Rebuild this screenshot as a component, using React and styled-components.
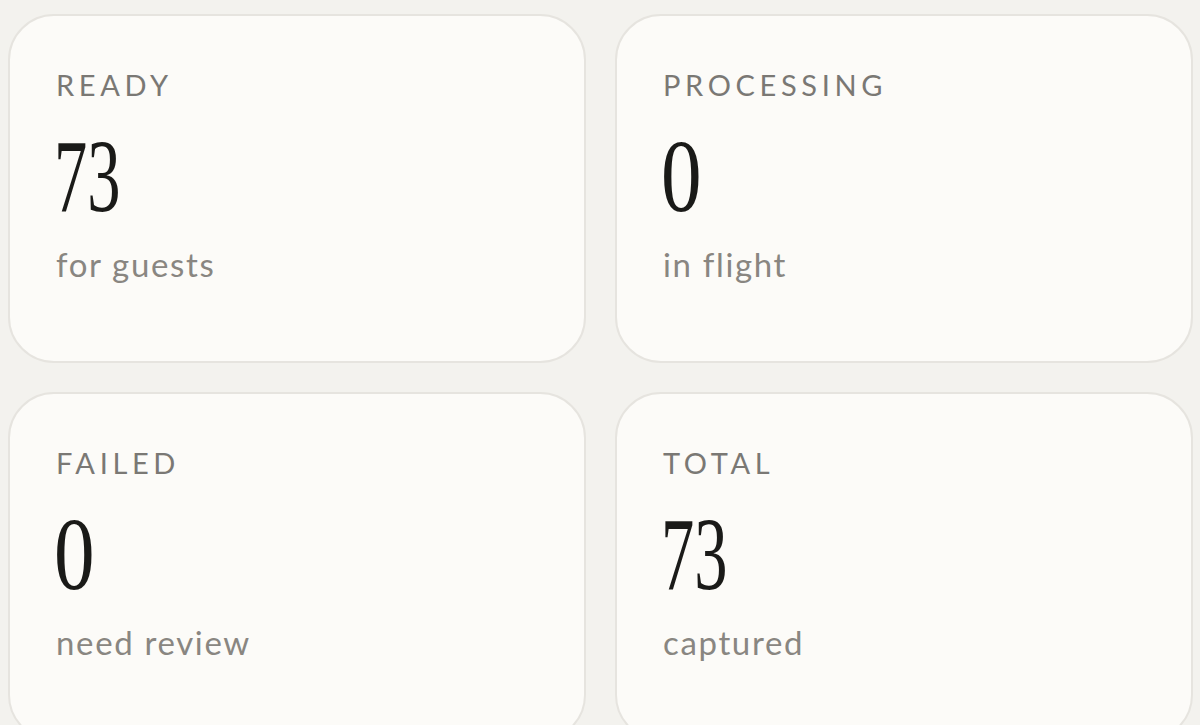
import styled, { createGlobalStyle } from "styled-components"

const GlobalStyle = createGlobalStyle`
    html, body {
        margin: 0;
        padding: 0;
        background-color: #f3f2ee;
        overflow: hidden;
    }
`

const Grade = styled.main`
    display: grid;
    grid-template-columns: 1fr 1fr;
    gap: 29px;
    padding: 14px 7px 0 8px;
    height: 725px;
    box-sizing: border-box;
`

const Cartao = styled.section`
    box-sizing: border-box;
    height: 349px;
    background-color: #fcfbf8;
    border: 2px solid #e6e4df;
    border-radius: 46px;
    padding: 54px 46px 0;
    display: flex;
    flex-direction: column;
    align-items: flex-start;
`

const Rotulo = styled.span`
    font-family: "Lato", "Liberation Sans", sans-serif;
    font-size: 29px;
    line-height: 1;
    letter-spacing: 0.16em;
    color: #7a7874;
`

const Numero = styled.span`
    display: inline-block;
    margin-top: 25px;
    margin-left: -2px;
    font-family: "Liberation Serif", serif;
    font-size: 104px;
    line-height: 1;
    color: #1a1a18;
    transform: scaleX(${(props) => props.$escala});
    transform-origin: left center;
`

const Legenda = styled.span`
    margin-top: 20px;
    font-family: "Lato", "Liberation Sans", sans-serif;
    font-size: 33px;
    line-height: 1;
    letter-spacing: 0.05em;
    color: #898681;
`

const estatisticas = [
    { rotulo: "READY", numero: 73, legenda: "for guests" },
    { rotulo: "PROCESSING", numero: 0, legenda: "in flight" },
    { rotulo: "FAILED", numero: 0, legenda: "need review" },
    { rotulo: "TOTAL", numero: 73, legenda: "captured" },
]

const App = () => {
    return (
        <>
            <GlobalStyle />
            <Grade>
                {estatisticas.map((item) => (
                    <Cartao key={item.rotulo}>
                        <Rotulo>{item.rotulo}</Rotulo>
                        <Numero $escala={String(item.numero).length > 1 ? 0.64 : 0.78}>
                            {item.numero}
                        </Numero>
                        <Legenda>{item.legenda}</Legenda>
                    </Cartao>
                ))}
            </Grade>
        </>
    )
}

export default App
